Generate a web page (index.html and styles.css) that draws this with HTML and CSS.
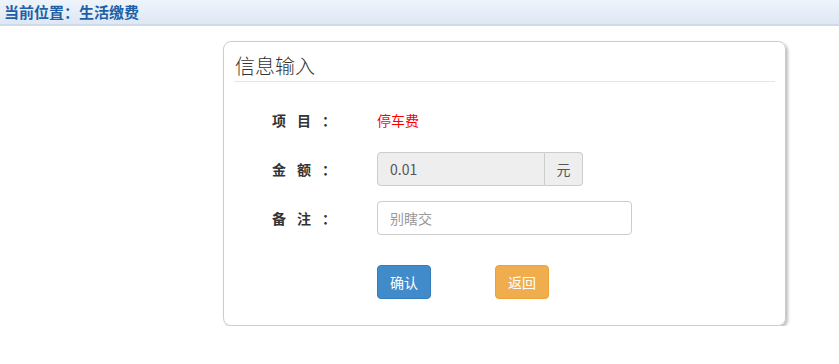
FILE: index.html
```html
<!DOCTYPE html>
<html lang="zh-CN">
<head>
  <meta charset="UTF-8" />
  <title>生活缴费</title>
  <link rel="stylesheet" href="styles.css">
</head>
<body>

  <!-- 位置导航 -->
  <div class="crumb">当前位置：生活缴费</div>

  <!-- 信息输入面板 -->
  <div class="panel">
    <div class="panel-title">信息输入</div>

    <div class="form">
      <div class="row">
        <label class="label">项目：</label>
        <span class="value-red">停车费</span>
      </div>

      <div class="row">
        <label class="label">金额：</label>
        <div class="input-group">
          <input type="text" class="input amount" value="0.01" disabled />
          <span class="addon">元</span>
        </div>
      </div>

      <div class="row">
        <label class="label">备注：</label>
        <input type="text" class="input remark" placeholder="别瞎交" />
      </div>

      <div class="row actions">
        <span></span>
        <div class="buttons">
          <button class="btn btn-blue">确认</button>
          <button class="btn btn-orange">返回</button>
        </div>
      </div>
    </div>
  </div>

</body>
</html>
```

FILE: styles.css
```css
:root {
  --blue: #428bca;
  --orange: #f0ad4e;
  --border: #cccccc;
  --text: #333333;
}

body {
  margin: 0;
  font-family: "Noto Sans CJK SC", "Liberation Sans", sans-serif;
  font-size: 14px;
  color: var(--text);
  background: #ffffff;
}

.crumb {
  height: 24px;
  line-height: 24px;
  padding-left: 4px;
  font-size: 15px;
  font-weight: bold;
  color: #1f5fa6;
  background: linear-gradient(to bottom, #eef4fb, #dde8f4);
  border-bottom: 2px solid #cfdbe7;
}

.panel {
  box-sizing: border-box;
  width: 563px;
  margin: 15px 0 0 223px;
  padding-bottom: 26px;
  border: 1px solid #cccccc;
  border-radius: 8px;
  box-shadow: 2px 2px 3px rgba(0, 0, 0, 0.25);
}

.panel-title {
  margin: 0 10px;
  padding: 11px 0 2px 1px;
  font-size: 20px;
  font-weight: 300;
  line-height: 26px;
  color: #333333;
  border-bottom: 1px solid #e5e5e5;
}

.form {
  display: flex;
  flex-direction: column;
  gap: 15px;
  padding-top: 21px;
}

.row {
  display: grid;
  grid-template-columns: 153px 1fr;
  align-items: center;
  height: 34px;
}

.row.actions {
  margin-top: 15px;
}

.label {
  padding-left: 48px;
  font-weight: bold;
  letter-spacing: 11px;
  color: #333333;
}

.value-red {
  color: #ff0000;
}

.input-group {
  display: flex;
  width: 206px;
}

.input {
  box-sizing: border-box;
  height: 34px;
  padding: 0 12px;
  font-family: inherit;
  font-size: 14px;
  color: #555555;
  border: 1px solid var(--border);
  border-radius: 4px;
  outline: none;
}

.input::placeholder {
  color: #999999;
}

.amount {
  width: 168px;
  background: #eeeeee;
  border-radius: 4px 0 0 4px;
}

.addon {
  box-sizing: border-box;
  width: 38px;
  height: 34px;
  line-height: 32px;
  text-align: center;
  color: #555555;
  background: #eeeeee;
  border: 1px solid var(--border);
  border-left: none;
  border-radius: 0 4px 4px 0;
}

.remark {
  width: 255px;
}

.buttons {
  display: flex;
  gap: 64px;
}

.btn {
  box-sizing: border-box;
  width: 54px;
  height: 34px;
  padding: 0;
  font-family: inherit;
  font-size: 14px;
  color: #ffffff;
  border: 1px solid transparent;
  border-radius: 4px;
  cursor: pointer;
}

.btn-blue {
  background: var(--blue);
  border-color: #357ebd;
}

.btn-orange {
  background: var(--orange);
  border-color: #eea236;
}
```
